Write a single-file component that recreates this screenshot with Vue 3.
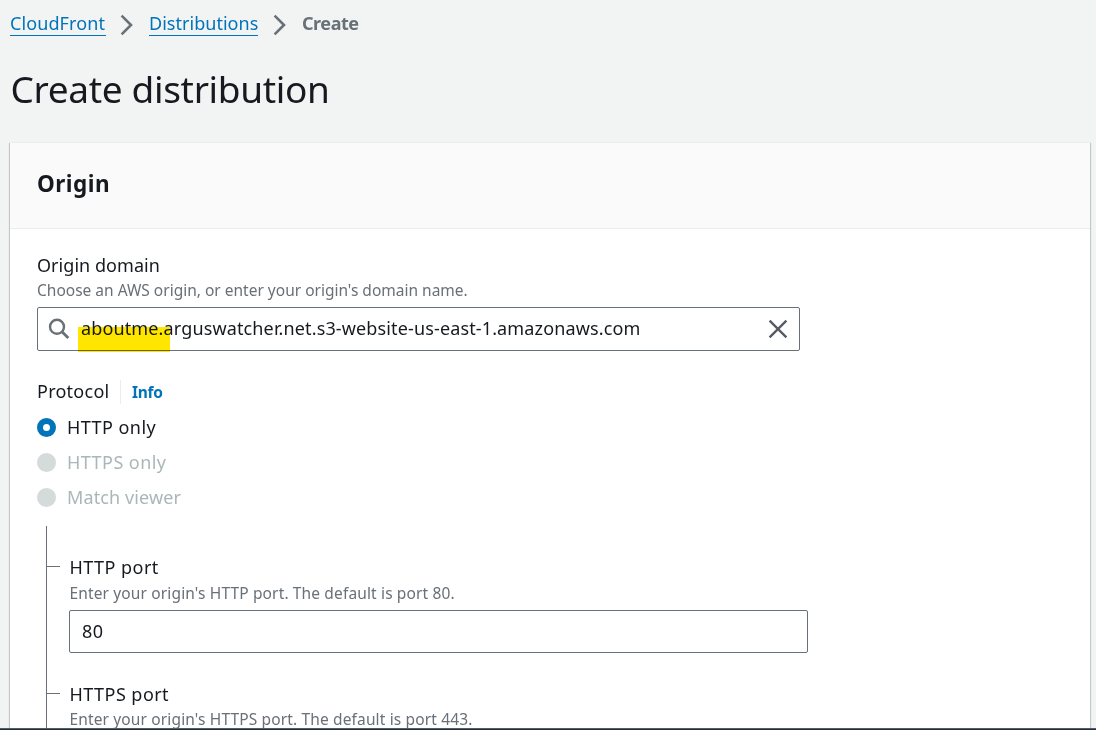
<script setup>
const crumbs = ['CloudFront', 'Distributions']
const protocols = [
  { label: 'HTTP only', cls: 'p-http', disabled: false },
  { label: 'HTTPS only', cls: 'p-https', disabled: true },
  { label: 'Match viewer', cls: 'p-match', disabled: true },
]
</script>

<template>
  <div class="page">
    <nav class="crumbs">
      <template v-for="(c, i) in crumbs" :key="c">
        <a :class="'crumb-' + i">{{ c }}</a>
        <svg class="chevron" width="14" height="22" viewBox="0 0 14 22">
          <path d="M1.6 1.6 L11 11 L1.6 20.4" fill="none" stroke="#687078" stroke-width="2.6" />
        </svg>
      </template>
      <span class="current">Create</span>
    </nav>
    <h1>Create distribution</h1>

    <section class="card">
      <header><h2>Origin</h2></header>
      <div class="body">
        <div class="label">Origin domain</div>
        <div class="hint">Choose an AWS origin, or enter your origin's domain name.</div>
        <div class="field search">
          <svg class="lens" width="22" height="22" viewBox="0 0 22 22" fill="none" stroke="#687078">
            <circle cx="9" cy="8.8" r="7" stroke-width="2.4" />
            <path d="M14 13.8 L20.3 20" stroke-width="2.8" />
          </svg>
          <span class="value">aboutme.arguswatcher.net.s3-website-us-east-1.amazonaws.com</span>
          <svg class="clear" width="20" height="20" viewBox="0 0 20 20">
            <path d="M1.6 1.6 L18.4 18.4 M18.4 1.6 L1.6 18.4" fill="none" stroke="#545b64" stroke-width="2.3" />
          </svg>
          <i class="marker"></i>
        </div>

        <div class="protocol">
          <div class="label l-protocol">Protocol</div>
          <a class="info">Info</a>
        </div>
        <div v-for="p in protocols" :key="p.label" class="option" :class="[p.cls, { disabled: p.disabled }]">
          <i class="radio"></i><span>{{ p.label }}</span>
        </div>

        <div class="tree">
          <div class="port">
            <div class="label">HTTP port</div>
            <div class="hint h-http">Enter your origin's HTTP port. The default is port 80.</div>
            <div class="field small"><span>80</span></div>
          </div>
          <div class="port">
            <div class="label">HTTPS port</div>
            <div class="hint">Enter your origin's HTTPS port. The default is port 443.</div>
          </div>
        </div>
      </div>
    </section>
    <div class="edge"></div>
  </div>
</template>

<style>
body { margin: 0; overflow: hidden; }
</style>

<style scoped>
* { box-sizing: border-box; }
.page {
  position: relative;
  height: 730px;
  overflow: hidden;
  background: #f2f3f3;
  color: #16191f;
  font: 18px/24px "Noto Sans", sans-serif;
  white-space: nowrap;
}
.crumbs { display: flex; height: 48px; padding: 12px 0 0 10px; }
.crumbs a { height: 24px; color: #0073bb; border-bottom: 1px solid #0073bb; line-height: 23px; }
.crumb-0 { width: 96px; letter-spacing: 0.1px; }
.crumb-1 { width: 109px; letter-spacing: 0.03px; }
.chevron { margin: 2px 15px 0 14px; }
.crumb-1 + .chevron { margin-left: 15px; }
.current { color: #687078; font-weight: 700; line-height: 23px; letter-spacing: -0.45px; }
h1 { margin: 17px 0 0 10.5px; height: 77px; font-size: 37px; line-height: 48px; font-weight: 400; letter-spacing: -0.33px; }
.card {
  width: 1080px;
  height: 620px;
  margin-left: 10px;
  background: #fff;
  box-shadow: 0 1px 1px rgba(0, 28, 36, .3), 1px 1px 1px rgba(0, 28, 36, .15), -1px 1px 1px rgba(0, 28, 36, .15);
  border-top: 1px solid #eaeded;
}
header { height: 86px; padding: 26px 27px; background: #fafafa; border-bottom: 1px solid #eaeded; }
h2 { margin: 0; font-size: 22.5px; line-height: 30px; font-weight: 700; letter-spacing: 0.5px; }
.body { padding: 24px 27px; }
.label { height: 24px; letter-spacing: 0.05px; }
.hint { height: 26px; font-size: 15.5px; line-height: 26px; color: #687078; }
.field {
  position: relative;
  display: flex;
  align-items: center;
  border: 1px solid #687078;
  border-radius: 2px;
}
.search { width: 763px; height: 44px; margin-top: 4px; padding: 0 11px 0 10px; }
.lens { flex: none; }
.value { margin: 0 0 2px 11px; letter-spacing: 0.135px; }
.clear { margin-left: auto; }
.marker {
  position: absolute;
  left: 40px;
  top: 19px;
  width: 92px;
  height: 25px;
  background: #ffe600;
  mix-blend-mode: multiply;
}
.protocol { display: flex; height: 24px; margin: 29px 0 11px; }
.l-protocol { width: 84px; border-right: 1px solid #eaeded; line-height: 22px; letter-spacing: 0.25px; }
.info { margin-left: 11px; color: #0073bb; font-size: 15.5px; font-weight: 700; letter-spacing: -0.3px; }
.option { display: flex; align-items: center; height: 25px; margin-bottom: 10px; }
.option span { line-height: 24px; margin-bottom: 2px; letter-spacing: 0.45px; }
.p-match span { letter-spacing: 0.12px; }
.radio { flex: none; width: 19px; height: 19px; margin-right: 11px; border: 6px solid #0073bb; border-radius: 50%; background: #fff; }
.disabled { color: #aab7b8; }
.disabled .radio { border-color: #d5dbdb; background: #d5dbdb; }
.tree { height: 230px; margin: 16px 0 0 9px; padding: 29px 0 0 23px; border-left: 1px solid #687078; }
.port { position: relative; height: 127px; }
.port .label { margin-left: -0.5px; letter-spacing: 0.45px; }
.port .hint { margin-left: -0.5px; letter-spacing: 0.14px; }
.port .h-http { line-height: 28px; }
.port::before { content: ""; position: absolute; left: -23px; top: 11px; width: 13px; height: 1px; background: #687078; }
.small { width: 739px; height: 43px; margin-top: 5px; margin-left: -1px; padding-left: 12px; letter-spacing: 0.4px; }
.small span { margin-bottom: 2px; }
.edge { position: absolute; left: 0; bottom: 0; width: 100%; height: 2px; background: #232f3e; border-top: 1px solid #545b64; }
</style>
